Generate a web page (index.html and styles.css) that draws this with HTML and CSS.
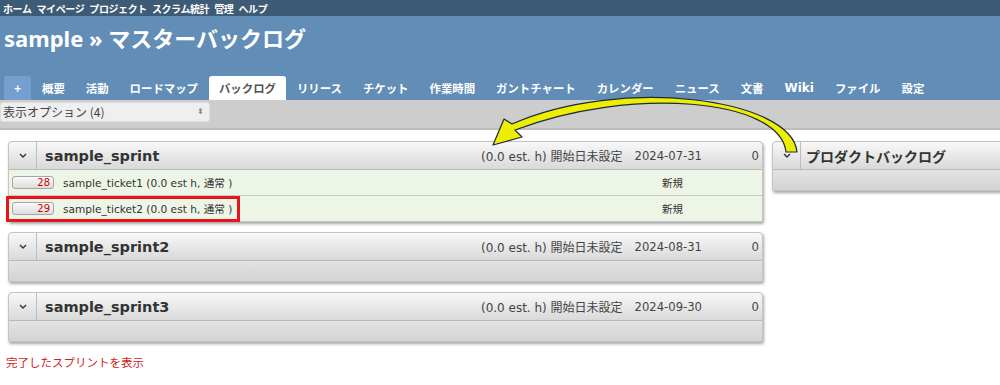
FILE: index.html
```html
<!DOCTYPE html>
<html lang="ja">

<head>
  <meta charset="UTF-8" />
  <title>マスターバックログ - sample</title>
  <link rel="stylesheet" href="styles.css">
</head>

<body>
  <div class="top-menu">
    <a>ホーム</a>
    <a>マイページ</a>
    <a>プロジェクト</a>
    <a>スクラム統計</a>
    <a>管理</a>
    <a>ヘルプ</a>
  </div>

  <div class="header">
    <h1>sample » マスターバックログ</h1>
    <ul class="tabs">
      <li class="new-tab">+</li>
      <li>概要</li>
      <li>活動</li>
      <li>ロードマップ</li>
      <li class="selected">バックログ</li>
      <li>リリース</li>
      <li>チケット</li>
      <li>作業時間</li>
      <li>ガントチャート</li>
      <li>カレンダー</li>
      <li>ニュース</li>
      <li>文書</li>
      <li class="latin">Wiki</li>
      <li>ファイル</li>
      <li>設定</li>
    </ul>
  </div>

  <div class="options-bar">
    <div class="select">表示オプション (4)<span class="select-arrows">&#x2B0D;</span></div>
  </div>

  <div class="content">
    <div class="columns">
      <div class="sprints">

        <div class="sprint">
          <div class="sprint-head">
            <span class="toggle"><svg width="8" height="5" viewBox="0 0 8 5"><polyline points="1,1 4,4 7,1" /></svg></span>
            <span class="sprint-name">sample_sprint</span>
            <span class="est">(0.0 est. h) 開始日未設定</span>
            <span class="date">2024-07-31</span>
            <span class="pts">0</span>
          </div>
          <ul class="stories">
            <li class="story">
              <span class="story-main"><span class="story-id">28</span><span class="subject">sample_ticket1 (0.0 est h, 通常 )</span></span>
              <span class="status">新規</span>
            </li>
            <li class="story">
              <span class="story-main marked"><span class="story-id">29</span><span class="subject">sample_ticket2 (0.0 est h, 通常 )</span></span>
              <span class="status">新規</span>
            </li>
          </ul>
        </div>

        <div class="sprint">
          <div class="sprint-head">
            <span class="toggle"><svg width="8" height="5" viewBox="0 0 8 5"><polyline points="1,1 4,4 7,1" /></svg></span>
            <span class="sprint-name">sample_sprint2</span>
            <span class="est">(0.0 est. h) 開始日未設定</span>
            <span class="date">2024-08-31</span>
            <span class="pts">0</span>
          </div>
          <div class="empty-body"></div>
        </div>

        <div class="sprint">
          <div class="sprint-head">
            <span class="toggle"><svg width="8" height="5" viewBox="0 0 8 5"><polyline points="1,1 4,4 7,1" /></svg></span>
            <span class="sprint-name">sample_sprint3</span>
            <span class="est">(0.0 est. h) 開始日未設定</span>
            <span class="date">2024-09-30</span>
            <span class="pts">0</span>
          </div>
          <div class="empty-body"></div>
        </div>

      </div>

      <div class="backlog">
        <div class="sprint-head">
          <span class="toggle"><svg width="8" height="5" viewBox="0 0 8 5"><polyline points="1,1 4,4 7,1" /></svg></span>
          <span class="backlog-name">プロダクトバックログ</span>
        </div>
        <div class="empty-body"></div>
      </div>
    </div>

    <a class="show-done">完了したスプリントを表示</a>
  </div>

  <!-- drag hint: story moves from product backlog into the sprint -->
  <svg class="drag-arrow" width="1000" height="385" viewBox="0 0 1000 385">
    <path d="M 797 152 C 792 98, 620 76, 512 124 L 504 119 L 493 145 L 522 137 L 515 130 C 630 86, 780 98, 786 152 Z" />
  </svg>
</body>

</html>
```

FILE: styles.css
```css
* {
  box-sizing: border-box;
  margin: 0;
  padding: 0;
}

body {
  font-family: "DejaVu Sans", "Noto Sans CJK JP", sans-serif;
  font-size: 12px;
  color: #333;
  background: #fff;
  width: 1000px;
  height: 385px;
  overflow: hidden;
  position: relative;
}

/* top bar */
.top-menu {
  background: #3e5b76;
  height: 16px;
  display: flex;
  align-items: center;
  gap: 5px;
  padding-left: 3px;
  font-family: "Noto Sans CJK JP", sans-serif;
  font-size: 10px;
  font-weight: bold;
  letter-spacing: -0.4px;
  color: #fff;
}

/* header + tabs */
.header {
  background: #628db6;
  height: 84px;
  padding-top: 7px;
}

.header h1 {
  font-family: "Noto Sans", "Noto Sans CJK JP", sans-serif;
  font-size: 22px;
  font-weight: bold;
  line-height: 30px;
  color: #fff;
  padding-left: 4px;
}

.tabs {
  list-style: none;
  display: flex;
  margin-top: 23px;
  padding-left: 4px;
}

.tabs li {
  height: 24px;
  line-height: 24px;
  padding: 0 10px;
  margin-right: 1px;
  font-family: "Noto Sans CJK JP", sans-serif;
  font-size: 11.4px;
  font-weight: bold;
  color: #fff;
  border-radius: 3px 3px 0 0;
}

.tabs .latin {
  font-family: "DejaVu Sans", sans-serif;
  font-size: 12px;
}

.tabs .new-tab {
  width: 27px;
  padding: 0;
  text-align: center;
  background: #759fcf;
}

.tabs .selected {
  background: #fff;
  color: #555;
}

/* options */
.options-bar {
  background: #cdcdcd;
  height: 30px;
  border-bottom: 2px solid #bdbdbd;
  padding-top: 2px;
}

.select {
  width: 210px;
  height: 20px;
  line-height: 18px;
  background: #efefef;
  border: 1px solid #dedede;
  border-radius: 3px;
  padding-left: 2px;
  font-family: "Noto Sans CJK JP", sans-serif;
  font-size: 12px;
  color: #444;
  display: flex;
  justify-content: space-between;
}

.select-arrows {
  font-family: "DejaVu Sans", sans-serif;
  font-size: 8px;
  color: #888;
  padding-right: 5px;
}

/* main */
.content {
  padding: 11px 0 0 8px;
}

.columns {
  display: flex;
  gap: 9px;
  align-items: flex-start;
}

.sprints {
  width: 755px;
  flex-shrink: 0;
}

.sprint,
.backlog {
  border: 1px solid #c4c4c4;
  border-radius: 4px 4px 2px 2px;
  box-shadow: 1px 2px 3px rgba(0, 0, 0, 0.35);
  margin-bottom: 10px;
  background: #dadada;
}

.backlog {
  width: 240px;
  flex-shrink: 0;
}

.sprint-head {
  height: 28px;
  display: flex;
  align-items: center;
  background: linear-gradient(#f8f8f8, #d9d9d9);
  border-bottom: 1px solid #b9b9b9;
  border-radius: 4px 4px 0 0;
}

.toggle {
  width: 28px;
  height: 100%;
  flex-shrink: 0;
  border-right: 1px solid #bdbdbd;
  display: flex;
  align-items: center;
  justify-content: center;
}

.toggle polyline {
  fill: none;
  stroke: #333;
  stroke-width: 1.4;
}

.sprint-name {
  padding-left: 8px;
  font-size: 14.5px;
  font-weight: bold;
  color: #333;
}

.backlog-name {
  padding-left: 5px;
  font-family: "Noto Sans CJK JP", sans-serif;
  font-size: 14px;
  font-weight: bold;
  color: #333;
}

.est {
  margin-left: auto;
  font-size: 12px;
  color: #444;
}

.date {
  margin-left: 12px;
  font-size: 11.6px;
  color: #444;
}

.pts {
  width: 60px;
  text-align: right;
  padding-right: 3px;
  font-size: 11.6px;
  color: #444;
}

.empty-body {
  height: 20px;
  background: linear-gradient(#e3e3e3, #d3d3d3);
}

/* stories */
.stories {
  list-style: none;
}

.story {
  height: 26px;
  display: flex;
  align-items: center;
  background: #edf5e6;
  border-bottom: 1px solid #c9c9c9;
}

.story:last-child {
  height: 25px;
  border-bottom: none;
}

.story-main {
  height: 26px;
  margin-left: -3px;
  padding: 0 5px 0 3px;
  border: 3px solid transparent;
  display: flex;
  align-items: center;
}

.story-main.marked {
  border-color: #e8141b;
}

.story-id {
  width: 42px;
  height: 13px;
  line-height: 11px;
  border: 1px solid #a6a6a6;
  border-radius: 3px;
  background: linear-gradient(#fbfbfb, #dcdcdc);
  text-align: right;
  padding-right: 3px;
  font-size: 10px;
  color: #c00;
}

.subject {
  margin-left: 9px;
  font-size: 10.6px;
  color: #333;
}

.status {
  margin-left: auto;
  width: 100px;
  font-family: "Noto Sans CJK JP", sans-serif;
  font-size: 10.5px;
  color: #333;
}

.show-done {
  display: block;
  margin: 2px 0 0 -2px;
  font-family: "Noto Sans CJK JP", sans-serif;
  font-size: 11.5px;
  line-height: 16px;
  color: #c22;
}

/* overlay arrow */
.drag-arrow {
  position: absolute;
  top: 0;
  left: 0;
  pointer-events: none;
}

.drag-arrow path {
  fill: #eeee00;
  stroke: #1b2a3e;
  stroke-width: 1.2;
  stroke-linejoin: round;
}
```
